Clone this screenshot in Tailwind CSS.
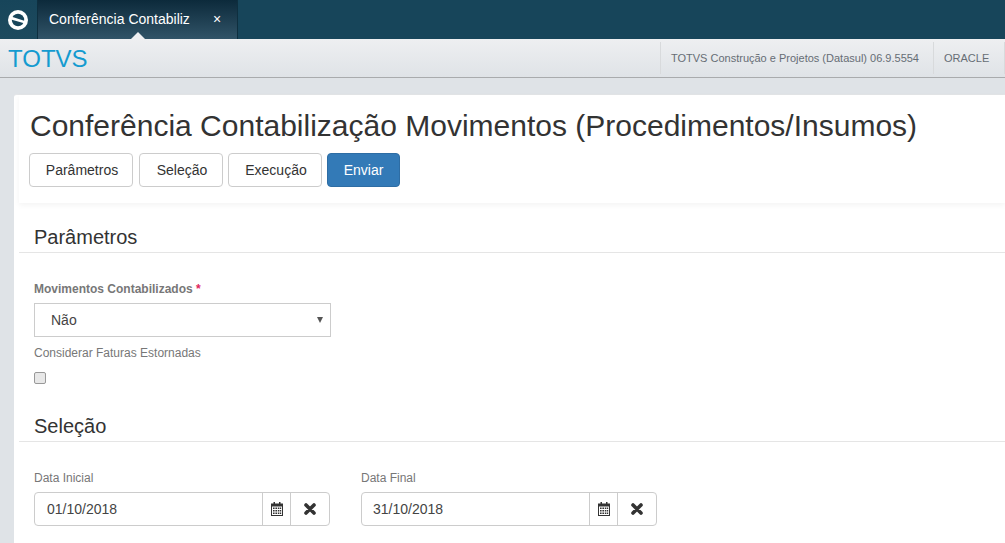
<!DOCTYPE html>
<html lang="pt-BR">
<head>
    <meta charset="UTF-8">
    <title>Conferência Contabilização Movimentos</title>
    <script src="https://cdn.jsdelivr.net/npm/@tailwindcss/browser@4"></script>
</head>
<body class="h-[543px] overflow-hidden bg-[#dfe3e7] font-['Liberation_Sans',Arial,sans-serif] text-[#333]">

    <!-- top bar -->
    <div class="flex h-[39px] bg-[#17455a]">
        <div class="flex w-[38px] items-center justify-center border-r border-[#0e2f3f] bg-gradient-to-b from-[#17455a] to-[#1d4a5e] pr-[2px]">
            <svg width="20" height="20" viewBox="0 0 20 20">
                <circle cx="10" cy="10" r="10" fill="#fff"/>
                <circle cx="10" cy="10" r="6.2" fill="#17455a"/>
                <path d="M3 6.6 L17 11 L17 13.4 L3 9.6 Z" fill="#fff"/>
            </svg>
        </div>
        <div class="relative flex w-[200px] items-center border-r border-[#0e2f3f] bg-gradient-to-b from-[#0c2a3b] to-[#315468] pl-[11px] text-[14px] text-white">
            <span class="w-[140px] whitespace-nowrap">Conferência Contabiliz</span>
            <span class="ml-[24px] text-[14px]">×</span>
            <div class="absolute bottom-0 left-[93px] h-0 w-0 border-x-[7px] border-b-[7px] border-x-transparent border-b-[#eeeff1]"></div>
        </div>
    </div>

    <!-- product bar -->
    <div class="flex h-[39px] items-stretch justify-between border-b border-[#a9abad] bg-gradient-to-b from-[#eeeff1] to-[#dfe3e7]">
        <div class="pl-[8px] pt-[5px] text-[24px] leading-[30px] text-[#149bd0]">TOTVS</div>
        <div class="flex items-stretch py-[3px] text-[11px] text-[#666d75]">
            <div class="flex items-center border-l border-[#d8dadc] pl-[10px] pr-[14px]">TOTVS Construção e Projetos (Datasul) 06.9.5554</div>
            <div class="flex w-[72px] items-center border-x border-[#d8dadc] pl-[10px]">ORACLE</div>
        </div>
    </div>

    <!-- page card -->
    <div class="ml-[14px] mt-[16px] h-[460px] rounded-tl-[3px] border-t border-[#e3e5e7] bg-white">
        <div class="ml-[5px] h-[108px] pl-[14px] shadow-[0_2px_6px_rgba(0,0,0,0.05)]">
            <h1 class="-ml-[3px] whitespace-nowrap pt-[13px] text-[30px] leading-[36px] text-[#333]">Conferência Contabilização Movimentos (Procedimentos/Insumos)</h1>
            <div class="-ml-[4px] mt-[9px] flex text-[14px]">
                <button class="h-[34px] w-[104px] rounded-[4px] border border-[#ccc] bg-white pl-[2px]">Parâmetros</button>
                <button class="ml-[6px] h-[34px] w-[84px] rounded-[4px] border border-[#ccc] bg-white pl-[2px]">Seleção</button>
                <button class="ml-[5px] h-[34px] w-[94px] rounded-[4px] border border-[#ccc] bg-white pl-[2px]">Execução</button>
                <button class="ml-[5px] h-[34px] w-[73px] rounded-[4px] border border-[#2e6da4] bg-[#337ab7] text-white">Enviar</button>
            </div>
        </div>

        <div class="ml-[5px]">
            <!-- Parâmetros -->
            <h2 class="border-b border-[#e5e5e5] pb-[3px] pl-[15px] pt-[22px] text-[20px] leading-[24px]">Parâmetros</h2>
            <div class="pl-[15px]">
                <div class="mt-[29px] text-[12px] font-bold leading-[14px] text-[#777]">Movimentos Contabilizados <span class="text-[#e0245e]">*</span></div>
                <div class="relative mt-[7px] flex h-[34px] w-[297px] items-center border border-[#ccc] bg-white pl-[16px] text-[14px] text-[#444]">
                    Não
                    <div class="absolute right-[7px] top-[13px] h-0 w-0 border-x-[3px] border-t-[6px] border-x-transparent border-t-[#555]"></div>
                </div>
                <div class="mt-[9px] text-[12px] leading-[14px] text-[#777]">Considerar Faturas Estornadas</div>
                <div class="mt-[12px] h-[12px] w-[12px] rounded-[2px] border border-[#999] bg-[#e8e8e8]"></div>
            </div>

            <!-- Seleção -->
            <h2 class="mt-[30px] border-b border-[#e5e5e5] pb-[3px] pl-[15px] text-[20px] leading-[24px]">Seleção</h2>
            <div class="mt-[29px] flex gap-[31px] pl-[15px]">
                <div>
                    <div class="text-[12px] leading-[14px] text-[#777]">Data Inicial</div>
                    <div class="mt-[7px] flex h-[34px] w-[296px] overflow-hidden rounded-[4px] border border-[#ccc] text-[14px] text-[#444]">
                        <div class="flex flex-1 items-center pl-[12px]">01/10/2018</div>
                        <div class="flex w-[28px] items-center justify-center border-l border-[#ccc]">
                            <svg width="12" height="14" viewBox="0 0 12 14" fill="#333"><path d="M0 1.5h12V14H0z M1 4.5v8.5h10V4.5z" fill-rule="evenodd"/><path d="M2 5.5h1.6v1.6H2zM4.4 5.5H6v1.6H4.4zM6.8 5.5h1.6v1.6H6.8zM9 5.5h1.2v1.6H9zM2 8h1.6v1.6H2zM4.4 8H6v1.6H4.4zM6.8 8h1.6v1.6H6.8zM9 8h1.2v1.6H9zM2 10.4h1.6V12H2zM4.4 10.4H6V12H4.4zM6.8 10.4h1.6V12H6.8zM9 10.4h1.2V12H9z"/><path d="M2.5 0h1.5v2.5H2.5zM8 0h1.5v2.5H8z"/></svg>
                        </div>
                        <div class="flex w-[39px] items-center justify-center border-l border-[#ccc]">
                            <svg width="12" height="12" viewBox="0 0 12 12"><path d="M2 2 L10 10 M10 2 L2 10" stroke="#333" stroke-width="3.6" stroke-linecap="round"/></svg>
                        </div>
                    </div>
                </div>
                <div>
                    <div class="text-[12px] leading-[14px] text-[#777]">Data Final</div>
                    <div class="mt-[7px] flex h-[34px] w-[296px] overflow-hidden rounded-[4px] border border-[#ccc] text-[14px] text-[#444]">
                        <div class="flex flex-1 items-center pl-[11px]">31/10/2018</div>
                        <div class="flex w-[28px] items-center justify-center border-l border-[#ccc]">
                            <svg width="12" height="14" viewBox="0 0 12 14" fill="#333"><path d="M0 1.5h12V14H0z M1 4.5v8.5h10V4.5z" fill-rule="evenodd"/><path d="M2 5.5h1.6v1.6H2zM4.4 5.5H6v1.6H4.4zM6.8 5.5h1.6v1.6H6.8zM9 5.5h1.2v1.6H9zM2 8h1.6v1.6H2zM4.4 8H6v1.6H4.4zM6.8 8h1.6v1.6H6.8zM9 8h1.2v1.6H9zM2 10.4h1.6V12H2zM4.4 10.4H6V12H4.4zM6.8 10.4h1.6V12H6.8zM9 10.4h1.2V12H9z"/><path d="M2.5 0h1.5v2.5H2.5zM8 0h1.5v2.5H8z"/></svg>
                        </div>
                        <div class="flex w-[39px] items-center justify-center border-l border-[#ccc]">
                            <svg width="12" height="12" viewBox="0 0 12 12"><path d="M2 2 L10 10 M10 2 L2 10" stroke="#333" stroke-width="3.6" stroke-linecap="round"/></svg>
                        </div>
                    </div>
                </div>
            </div>
        </div>
    </div>
</body>
</html>
